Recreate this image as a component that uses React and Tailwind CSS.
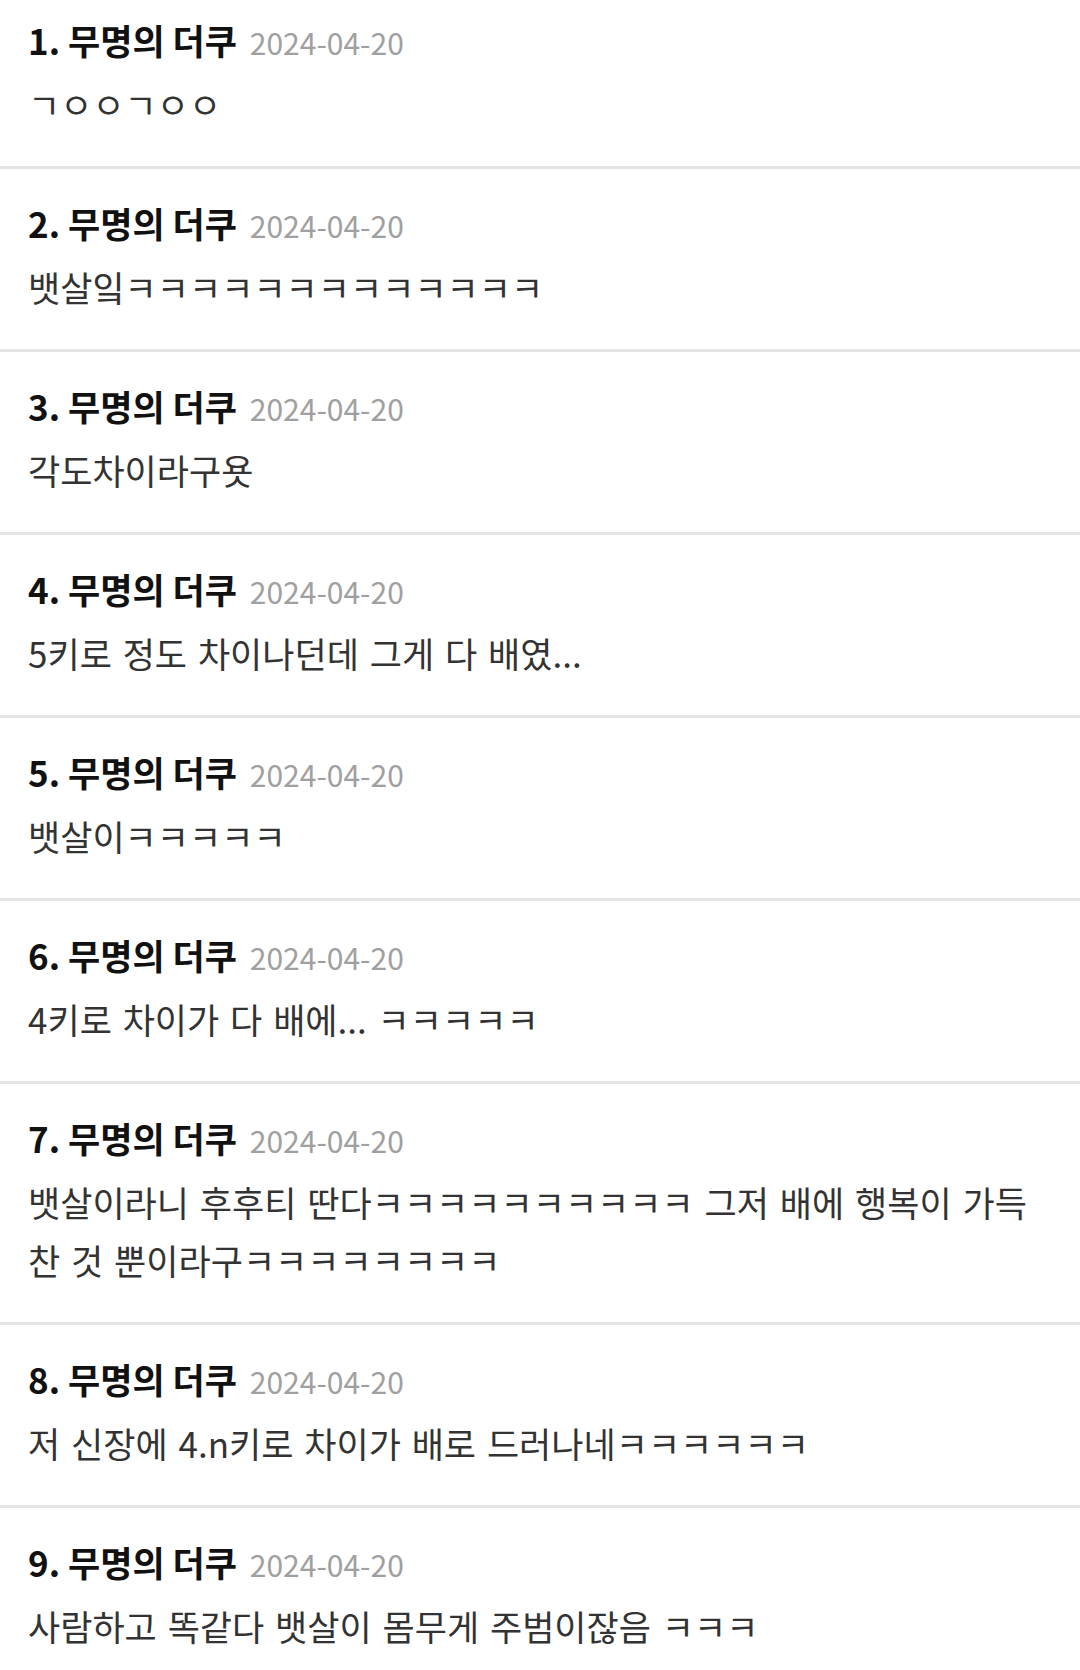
import React from 'react';

const comments = [
  { no: 1, author: "무명의 더쿠", date: "2024-04-20", body: "ㄱㅇㅇㄱㅇㅇ" },
  { no: 2, author: "무명의 더쿠", date: "2024-04-20", body: "뱃살잌ㅋㅋㅋㅋㅋㅋㅋㅋㅋㅋㅋㅋㅋ" },
  { no: 3, author: "무명의 더쿠", date: "2024-04-20", body: "각도차이라구욧" },
  { no: 4, author: "무명의 더쿠", date: "2024-04-20", body: "5키로 정도 차이나던데 그게 다 배였..." },
  { no: 5, author: "무명의 더쿠", date: "2024-04-20", body: "뱃살이ㅋㅋㅋㅋㅋ" },
  { no: 6, author: "무명의 더쿠", date: "2024-04-20", body: "4키로 차이가 다 배에... ㅋㅋㅋㅋㅋ" },
  { no: 7, author: "무명의 더쿠", date: "2024-04-20", body: "뱃살이라니 후후티 딴다ㅋㅋㅋㅋㅋㅋㅋㅋㅋㅋ 그저 배에 행복이 가득 찬 것 뿐이라구ㅋㅋㅋㅋㅋㅋㅋㅋ" },
  { no: 8, author: "무명의 더쿠", date: "2024-04-20", body: "저 신장에 4.n키로 차이가 배로 드러나네ㅋㅋㅋㅋㅋㅋ" },
  { no: 9, author: "무명의 더쿠", date: "2024-04-20", body: "사람하고 똑같다 뱃살이 몸무게 주범이잖음 ㅋㅋㅋ" },
];

const CommentItem = ({ comment }) => (
  <li className="pl-7 pr-[42px] pt-[32px] pb-[33px] first:pt-[18px] border-b-[3px] border-[#e4e4e4] last:border-b-0">
    <div className="text-[35px] leading-[44px] whitespace-nowrap">
      <span className="font-bold text-[#111111]">
        {comment.no}. {comment.author}
      </span>{" "}
      <span className="ml-[5px] text-[30px] leading-none text-[#a0a0a0]">{comment.date}</span>
    </div>
    <p className="mt-[13px] text-[35px] leading-[58px] text-[#333333] break-keep [word-spacing:3px]">
      {comment.body}
    </p>
  </li>
);

const App = () => {
  return (
    <div
      className="w-[1080px] h-[1670px] overflow-hidden bg-white"
      style={{ fontFamily: '"Noto Sans CJK KR", "Noto Sans", sans-serif' }}
    >
      <ul>
        {comments.map((c) => (
          <CommentItem key={c.no} comment={c} />
        ))}
      </ul>
    </div>
  );
};

export default App;
